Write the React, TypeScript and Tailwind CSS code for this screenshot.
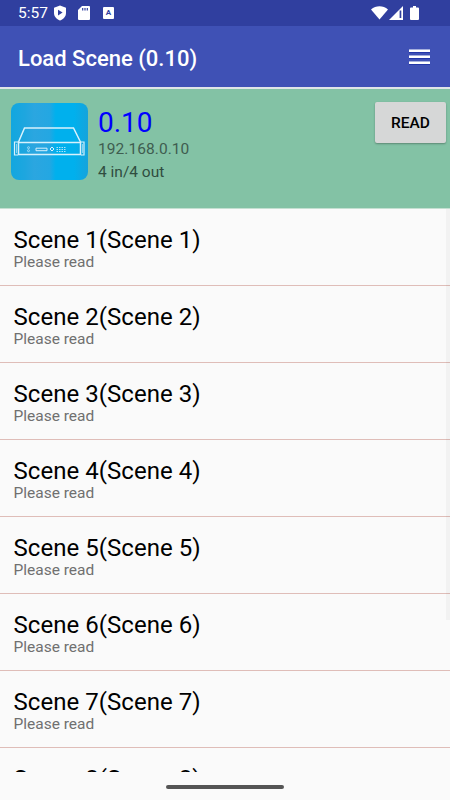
import React from 'react';

interface Scene {
    id: number;
    title: string;
    status: string;
}

const scenes: Scene[] = Array.from({ length: 8 }, (_, i) => ({
    id: i + 1,
    title: `Scene ${i + 1}(Scene ${i + 1})`,
    status: 'Please read',
}));

function StatusBar() {
    return (
        <div className="flex h-[26px] shrink-0 items-center bg-[#303f9f] pl-[18px] text-white">
            <span className="w-[36px] text-[15.5px] leading-[26px]">5:57</span>
            <svg className="h-[16px] w-[12px]" viewBox="0 0 12 16" fill="none">
                <path d="M6 0.5L12 2.8V8C12 11.5 9.5 14.3 6 15.5C2.5 14.3 0 11.5 0 8V2.8Z" fill="white" />
                <path d="M4 4.8V10.4L8.6 7.6Z" fill="#303f9f" />
            </svg>
            <svg className="ml-[12px] h-[14px] w-[12px]" viewBox="0 0 12 14" fill="none">
                <path d="M4 0H11Q12 0 12 1V13Q12 14 11 14H1Q0 14 0 13V4Z" fill="white" />
                <path d="M4.7 2V4.5M7 2V4.5M9.3 2V4.5" stroke="#303f9f" strokeWidth="1.2" />
            </svg>
            <span className="ml-[13px] flex h-[12px] w-[11px] flex-col items-center rounded-[1px] bg-white text-[8px] font-bold leading-[11px] text-[#303f9f]">
                A
            </span>
            <div className="ml-auto flex items-center pr-[31px]">
                <svg className="h-[14px] w-[17px]" viewBox="0 0 17 14">
                    <path d="M0 3.5C5 -0.8 12 -0.8 17 3.5L8.5 13.5Z" fill="white" />
                </svg>
                <svg className="ml-[1px] h-[14px] w-[14px]" viewBox="0 0 14 14">
                    <path d="M14 0V14H0Z" fill="white" />
                    <path d="M10.6 4.5H12.3V12H10.6Z" fill="#303f9f" />
                </svg>
                <svg className="ml-[7px] h-[14px] w-[9px]" viewBox="0 0 9 14">
                    <path d="M3 0H6V1.5H8Q9 1.5 9 2.5V13Q9 14 8 14H1Q0 14 0 13V2.5Q0 1.5 1 1.5H3Z" fill="white" />
                </svg>
            </div>
        </div>
    );
}

function AppBar() {
    return (
        <header className="flex h-[61px] shrink-0 items-center justify-between bg-[#3f51b5] pl-[18px] pr-[20px] text-white">
            <h1 className="pt-[4px] text-[22px] font-medium leading-[26px]">Load Scene (0.10)</h1>
            <button className="flex w-[21px] flex-col gap-[2px] pt-px" aria-label="Menu">
                <span className="h-[4px] w-full border-b border-t border-b-[#2336a8] border-t-[#a5afdd] bg-white" />
                <span className="h-[4px] w-full border-b border-t border-b-[#2336a8] border-t-[#a5afdd] bg-white" />
                <span className="h-[4px] w-full border-b border-t border-b-[#2336a8] border-t-[#a5afdd] bg-white" />
            </button>
        </header>
    );
}

function DeviceIcon() {
    return (
        <svg className="h-[77px] w-[77px] rounded-[8px]" viewBox="0 0 77 77" fill="none">
            <defs>
                <linearGradient id="device" x1="0" x2="77" y1="0" y2="0" gradientUnits="userSpaceOnUse">
                    <stop offset="0" stopColor="#12a7df" />
                    <stop offset="0.18" stopColor="#1ea6df" />
                    <stop offset="0.3" stopColor="#2ba6e0" />
                    <stop offset="0.5" stopColor="#24a7e2" />
                    <stop offset="0.58" stopColor="#00b0ed" />
                    <stop offset="0.82" stopColor="#00b0ed" />
                    <stop offset="1" stopColor="#16a3db" />
                </linearGradient>
            </defs>
            <rect width="77" height="77" fill="url(#device)" />
            <g stroke="#d8f1fc">
                <path d="M7.5 39L13.5 25H62.5L69.5 39" strokeWidth="1.5" />
                <path d="M7.5 39.5H69.5V51.5H7.5Z" strokeWidth="1.5" />
                <path d="M7 39H3.5V52H7M70 39H73V52H70" strokeWidth="1.2" />
                <path d="M5.5 41V50M71.5 41V50" strokeWidth="0.6" />
                <path d="M25 45.2H36V47.7H25Z" strokeWidth="1" />
                <circle cx="17.5" cy="44.7" r="1" strokeWidth="0.6" />
                <circle cx="17.5" cy="47.7" r="1" strokeWidth="0.6" />
                <path d="M41 44L43 46L41 48L39 46Z" strokeWidth="1" />
                <path d="M45.5 44.5H55M45.5 46.5H55M45.5 48.5H55" strokeWidth="0.8" strokeDasharray="1.5 1" />
            </g>
        </svg>
    );
}

function DeviceHeader() {
    return (
        <section className="flex h-[122px] shrink-0 items-start border-b border-t-2 border-b-[#c5e0d2] border-t-[#dfe5e8] bg-[#83c2a5] pl-[11px] pr-[4px]">
            <div className="mt-[14px]">
                <DeviceIcon />
            </div>
            <div className="ml-[10px] mt-[17px]">
                <div className="text-[28px] leading-[33px] text-[#0000ff]">0.10</div>
                <div className="text-[15.5px] leading-[20px] tracking-[0.06px] text-[#3f5d50]">192.168.0.10</div>
                <div className="mt-[3px] text-[15.5px] leading-[20px] text-[#304d40]">4 in/4 out</div>
            </div>
            <button className="ml-auto mt-[13px] h-[41px] w-[71px] rounded-[2px] bg-[#d6d7d7] pt-[2px] text-[15.5px] font-medium text-black shadow-[0_1px_2px_rgba(0,0,0,0.3)]">
                READ
            </button>
        </section>
    );
}

function SceneRow({ scene }: { scene: Scene }) {
    return (
        <li className="h-[77px] border-b border-[#dfbdb8] pl-[13.5px] pt-[18px]">
            <div className="text-[24px] leading-[26px] tracking-[0.04px] text-black">{scene.title}</div>
            <div className="text-[15.5px] leading-[18px] text-[#707070]">{scene.status}</div>
        </li>
    );
}

export default function App() {
    return (
        <div className="flex h-[800px] w-[450px] flex-col overflow-hidden bg-[#fafafa] font-[Roboto,sans-serif]">
            <StatusBar />
            <AppBar />
            <DeviceHeader />
            <main className="relative h-[563px] shrink-0 overflow-hidden">
                <ul>
                    {scenes.map((scene) => (
                        <SceneRow key={scene.id} scene={scene} />
                    ))}
                </ul>
                <div className="absolute right-0 top-0 h-[411px] w-[4px] bg-black/[0.03]" />
            </main>
            <div className="flex flex-1 justify-center pt-[13px]">
                <div className="h-[4px] w-[118px] rounded-full bg-[#555555]" />
            </div>
        </div>
    );
}
